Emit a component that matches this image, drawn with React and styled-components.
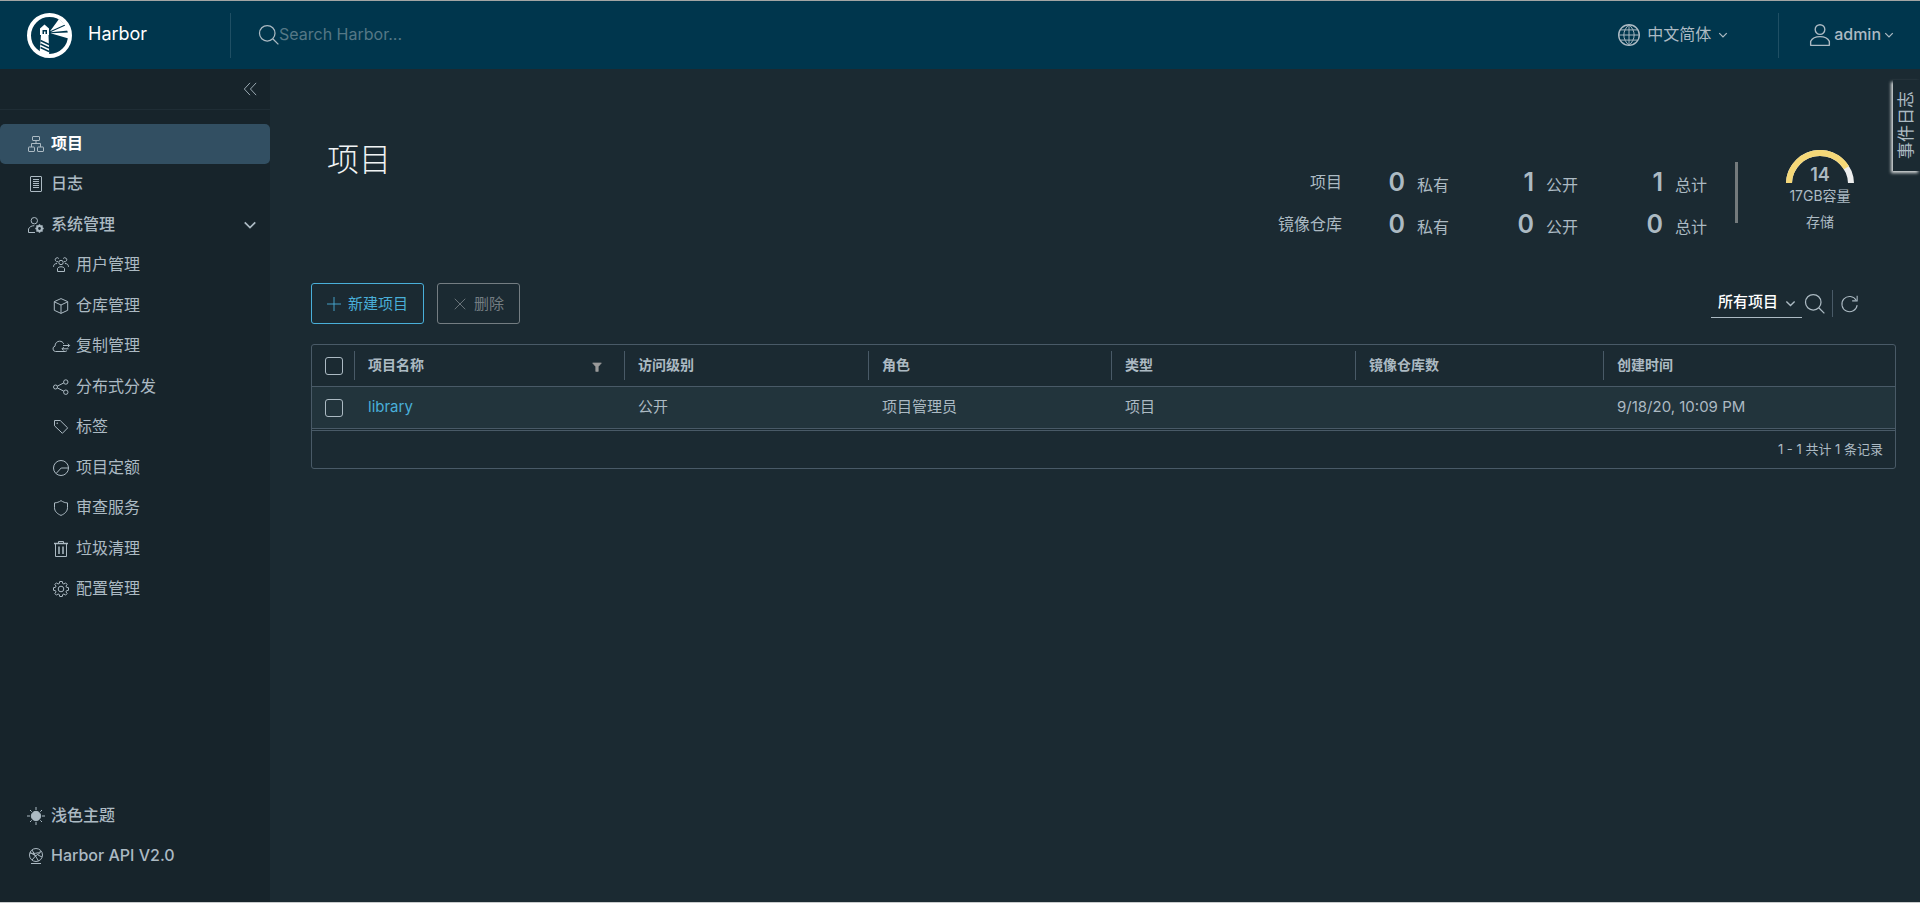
import React from 'react';
import styled, { createGlobalStyle, css } from 'styled-components';

const color = {
  header: '#00364d',
  side: '#17242b',
  page: '#1b2a32',
  active: '#324f62',
  text: '#acbac3',
  line: '#495a67',
  row: '#22343c',
  link: '#49afd9',
  muted: '#747d82',
};

const GlobalStyle = createGlobalStyle`
  *, *::before, *::after { box-sizing: border-box; }
  body {
    margin: 0;
    background: ${color.page};
    color: ${color.text};
    font-family: Inter, "Noto Sans CJK SC", sans-serif;
    font-size: 16px;
    line-height: 24px;
  }
  button, input, select { font: inherit; color: inherit; }
  button { cursor: pointer; }
  ul, dl, dd, h1 { margin: 0; padding: 0; }
  ul { list-style: none; }
  a { color: inherit; text-decoration: none; }
`;

/* ---------- icons ---------- */

const Svg = styled.svg`
  display: block;
  flex: none;
  width: ${(p) => p.$size || 16}px;
  height: ${(p) => p.$size || 16}px;
  fill: none;
  stroke: currentColor;
  stroke-width: ${(p) => p.$stroke || 1};
`;

const icons = {
  tree: (
    <>
      <rect x="4.500" y="0.500" width="7" height="4" rx="0.500" />
      <rect x="0.500" y="11" width="6" height="4.500" rx="0.500" />
      <rect x="9.500" y="11" width="6" height="4.500" rx="0.500" />
      <path d="M8 4.500v3M3.500 11V7.500h9V11" />
    </>
  ),
  list: (
    <>
      <rect x="2.500" y="0.500" width="11" height="15" rx="0.500" />
      <path d="M5 3.500h6M5 5.500h6M5 7.500h6M5 9.500h6M5 11.500h6" />
    </>
  ),
  admin: (
    <>
      <circle cx="6.300" cy="3.700" r="3.200" />
      <path d="M7 15.500H.5V12c1-2.200 3-3.300 5.800-3.300" />
      <circle cx="11.500" cy="11.500" r="2.400" strokeWidth="2" />
      <path d="M11.500 7.300v2M11.500 13.700v2M7.300 11.500h2M13.700 11.500h2M8.500 8.500l1.500 1.500M13 13l1.500 1.500M14.500 8.500L13 10M10 13l-1.500 1.500" strokeWidth="1.500" />
    </>
  ),
  users: (
    <>
      <circle cx="8" cy="5.500" r="2.200" />
      <path d="M4.500 14.500v-3c1-2.300 6-2.300 7 0v3zM5 4.600A2 2 0 1 1 5.800 1.500M11 4.600a2 2 0 1 0-.8-3.100M.5 9.800c.2-2.300 1.300-3.300 3.600-3.300M15.500 9.800c-.2-2.300-1.300-3.300-3.600-3.300" />
    </>
  ),
  box: (
    <path d="M8 .6l6.700 3v8.700L8 15.400l-6.700-3.100V3.600zM1.300 3.800L8 7l6.700-3.200M8 7v8.400" />
  ),
  cloud: (
    <>
      <path d="M14 12.500a2.500 2.500 0 0 1-1.800 1H2.500A2.700 2.700 0 0 1 2 8.200C2 5 4.200 3.200 6.600 3.200c2 0 3.400 1 4.100 2.600" />
      <path d="M10 7.500h6.500M14.800 5.700l1.800 1.800-1.800 1.800M15.500 10.800H9M10.800 9l-1.800 1.800 1.800 1.800" />
    </>
  ),
  share: (
    <>
      <circle cx="2.500" cy="8" r="2" />
      <circle cx="12.800" cy="3" r="2.200" />
      <circle cx="12.800" cy="13.200" r="2.200" />
      <path d="M4.300 7.200l6.500-3.300M4.300 8.900l6.500 3.300" />
    </>
  ),
  tag: (
    <>
      <path d="M1.500 1.500h5.700l7.500 7.400-5.300 5.400L1.500 6.800z" strokeLinejoin="round" />
      <circle cx="4.200" cy="4.200" r=".4" />
    </>
  ),
  quota: (
    <>
      <circle cx="8" cy="8" r="7.500" />
      <path d="M15.500 8H8.200l-5 5.400" />
    </>
  ),
  shield: (
    <path d="M8 .6c2 1.500 4.200 2.200 6.500 2.300v4.800c0 3.500-2.500 6-6.500 7.700-4-1.700-6.500-4.200-6.500-7.700V2.900C3.800 2.800 6 2.100 8 .6z" />
  ),
  trash: (
    <>
      <path d="M2.500 3v12.500h11V3M5.500 2.500v-2h5v2" />
      <path d="M1 2.500h14" strokeWidth="1.500" />
      <path d="M6 5.500v7.500M10 5.500v7.500" strokeWidth="1.500" />
    </>
  ),
  cog: (
    <>
      <circle cx="8" cy="8" r="2.800" />
      <path d="M6.700.5h2.600l.4 2 1.200.5 1.700-1.100 1.500 1.500L13 5.100l.5 1.200 2 .4v2.600l-2 .4-.5 1.200 1.100 1.700-1.500 1.500-1.700-1.100-1.200.5-.4 2H6.700l-.4-2-1.200-.5-1.700 1.100-1.500-1.500L3 10.900l-.5-1.200-2-.4V6.700l2-.4L3 5.100 1.900 3.400l1.500-1.500L5.100 3l1.200-.5z" strokeLinejoin="round" />
    </>
  ),
  sun: (
    <>
      <circle cx="8" cy="8" r="4.700" fill="currentColor" />
      <path d="M8-1v3M8 14v3M-1 8h3M14 8h3M2 2l1.700 1.700M12.300 12.300L14 14M14 2l-1.700 1.700M3.700 12.300L2 14" />
    </>
  ),
  api: (
    <>
      <circle cx="8" cy="7" r="6.500" />
      <path d="M3 15.500h10" />
      <path d="M2 5c3 .8 8 .5 11-1.500M4 12l3.500-4L4 2M7.500 8l3 5M7.500 8l5-3.500M2 4.500l6 3.500M10 7l4 2" />
    </>
  ),
  search: (
    <>
      <circle cx="6.600" cy="6.600" r="6.200" />
      <path d="M11.200 11.200l4.300 4.300" />
    </>
  ),
  globe: (
    <>
      <circle cx="8" cy="8" r="7.500" />
      <path d="M8 .5v15M1.700 4.300h12.600M.5 8h15M1.700 11.700h12.600M8 .5c-5 4.500-5 10.500 0 15M8 .5c5 4.500 5 10.500 0 15" strokeWidth=".7" />
    </>
  ),
  user: (
    <>
      <circle cx="8" cy="4" r="3.500" />
      <path d="M1.200 15.500v-2.900C2.400 10.300 5 9.200 8 9.200s5.600 1.100 6.800 3.400v2.900z" strokeLinejoin="round" />
    </>
  ),
  down: <path d="M2 5L8 11 14 5" />,
  collapse: <path d="M8 1L1.500 8 8 15M15 1L8.500 8l6.500 7" />,
  plus: <path d="M8 0v16M0 8h16" />,
  close: <path d="M2 2l12 12M14 2L2 14" />,
  refresh: (
    <>
      <path d="M14.300 5A7.200 7.200 0 1 0 15.200 9.500" />
      <path d="M15.200.8v4.700h-4.700" />
    </>
  ),
  filter: <path d="M1 1.500h14l-5 6v7.500H6V7.500z" fill="currentColor" />,
};

const Icon = ({ name, size, stroke }) => (
  <Svg viewBox="0 0 16 16" overflow="visible" $size={size} $stroke={stroke} aria-hidden="true">
    {icons[name]}
  </Svg>
);

const Logo = () => (
  <svg width="45" height="45" viewBox="0 0 45 45" aria-hidden="true">
    <circle cx="22.500" cy="22.500" r="20.500" fill="none" stroke="#fff" strokeWidth="4" />
    <path d="M17.500 11.500l4.500 4v6.500H13v-6.500z" fill="#fff" />
    <path d="M15.500 17h4.500v4h-1.500v-2.500h-1.500V21h-1.500z" fill={color.header} />
    <path d="M14 22h7.500l.8 21.500-9.800-2.500z" fill="#fff" />
    <path d="M13.500 27.500l8.500 4M13.500 31l8.500 4M13.500 34.500l8.500 4" stroke={color.header} strokeWidth="1.400" />
    <path d="M23 18.200L32 6l6 5.500zM23.500 19.200L39.500 12l1.800 5.500zM23.500 20.300l18-.8v6z" fill="#fff" />
  </svg>
);

/* ---------- shell ---------- */

const Shell = styled.div`
  display: flex;
  flex-direction: column;
  min-height: 100vh;
  border-top: 1px solid #a3a5a4;
  border-bottom: 1px solid #c9cccd;
`;

const Header = styled.header`
  display: flex;
  align-items: center;
  height: 68px;
  padding-right: 26px;
  background: ${color.header};
`;

const HeaderText = styled.span`
  padding-bottom: 2px;
`;

const Brand = styled.a`
  display: flex;
  align-items: center;
  gap: 16px;
  width: 230px;
  padding-left: 27px;
  color: #fff;
  font-size: 18px;
`;

const Divider = styled.span`
  flex: none;
  width: 1px;
  height: ${(p) => p.$height || 45}px;
  background: ${(p) => p.$tone || '#1f4f64'};
`;

const SearchBox = styled.label`
  display: flex;
  flex: 1;
  align-items: center;
  padding-left: 28px;
`;

const SearchInput = styled.input`
  flex: 1;
  min-width: 0;
  height: 24px;
  padding: 0 0 3px;
  border: 0;
  outline: 0;
  background: transparent;
  &::placeholder { color: #557886; opacity: 1; }
`;

const HeaderButton = styled.button`
  display: flex;
  align-items: center;
  gap: ${(p) => p.$gap}px;
  padding: 0;
  border: 0;
  background: none;
  font-weight: ${(p) => p.$weight || 400};
`;

const Account = styled.div`
  display: flex;
  align-items: center;
  gap: 30px;
  margin-left: 50px;
`;

const Body = styled.div`
  display: flex;
  flex: 1;
`;

/* ---------- sidebar ---------- */

const Sidebar = styled.nav`
  display: flex;
  flex: none;
  flex-direction: column;
  width: 270px;
  padding-bottom: 26px;
  background: ${color.side};
`;

const CollapseRow = styled.div`
  display: flex;
  align-items: center;
  justify-content: flex-end;
  height: 41px;
  margin-bottom: 14px;
  padding-right: 13px;
  border-bottom: 1px solid #1f2d35;
`;

const IconButton = styled.button`
  display: flex;
  padding: 0;
  border: 0;
  background: none;
`;

const NavItem = styled.a`
  display: flex;
  align-items: center;
  gap: 7px;
  height: 40px;
  padding: 0 13px 0 28px;
  border-radius: 5px;
  font-weight: 500;
  ${(p) =>
    p.$active &&
    css`
      background: ${color.active};
      color: #fff;
      font-weight: 700;
      svg { color: ${color.text}; }
    `}
`;

const NavLabel = styled.span`
  flex: 1;
  padding-bottom: 2px;
`;

const NavList = styled.ul`
  > li:nth-child(even) { margin-bottom: 1px; }
`;

const SubList = styled.ul`
  > li:nth-child(odd) { margin-bottom: 1px; }
  ${NavItem} {
    padding-left: 53px;
    font-weight: 400;
  }
`;

const NavFooter = styled.div`
  margin-top: auto;
`;

/* ---------- page ---------- */

const Main = styled.main`
  flex: 1;
  min-width: 0;
  padding: 68px 24px 24px 41px;
`;

const TopRow = styled.div`
  display: flex;
  justify-content: space-between;
  height: 113px;
`;

const Title = styled.h1`
  padding-left: 16px;
  font-size: 32px;
  font-weight: 300;
  line-height: 46px;
  color: #f0f3f4;
`;

const Summary = styled.div`
  display: flex;
  align-items: flex-start;
  margin-right: 42px;
`;

const Stats = styled.table`
  margin-top: 24px;
  margin-right: 28px;
  border-collapse: collapse;
  th {
    height: 42px;
    padding: 0;
    font-weight: 400;
    text-align: right;
  }
  td {
    width: 129px;
    padding: 0;
  }
  td:nth-child(2) { width: 107px; }
`;

const Stat = styled.div`
  display: flex;
  align-items: baseline;
  justify-content: flex-end;
  gap: 12px;
`;

const StatValue = styled.strong`
  font-size: 25px;
  font-weight: 600;
  line-height: 32px;
`;

const Bar = styled.span`
  width: 3px;
  height: 61px;
  margin-top: 25px;
  background: #747a7c;
`;

const Storage = styled.div`
  display: flex;
  flex-direction: column;
  align-items: center;
  width: 68px;
  margin-top: 13px;
  margin-left: 48px;
  font-size: 14px;
`;

const Gauge = styled.div`
  display: grid;
  justify-items: center;
  align-items: end;
  svg, strong { grid-area: 1 / 1; }
  strong {
    font-size: 18px;
    font-weight: 600;
    line-height: 16px;
  }
`;

const Capacity = styled.span`
  margin: 1px 0 2px;
  white-space: nowrap;
`;

const Toolbar = styled.div`
  display: flex;
  align-items: center;
  justify-content: space-between;
  margin: 33px 0 20px;
`;

const Group = styled.div`
  display: flex;
  align-items: center;
  gap: ${(p) => p.$gap}px;
`;

const Filters = styled(Group)`
  margin-right: 38px;
`;

const ActionButton = styled.button`
  display: flex;
  align-items: center;
  gap: 7px;
  height: 41px;
  padding: 0 15px;
  border: 1px solid currentColor;
  border-radius: 3px;
  background: transparent;
  color: ${color.link};
  font-size: 15px;
  &:disabled { color: ${color.muted}; cursor: default; }
`;

const SelectWrap = styled.label`
  display: grid;
  align-items: center;
  justify-items: end;
  width: 91px;
  border-bottom: 1px solid ${color.text};
  select, svg { grid-area: 1 / 1; }
  svg {
    margin-right: 6px;
    pointer-events: none;
  }
`;

const Select = styled.select`
  width: 100%;
  height: 27px;
  padding: 0 0 3px 7px;
  border: 0;
  outline: 0;
  appearance: none;
  background: transparent;
  color: #fff;
  font-size: 15px;
  font-weight: 500;
`;

const RefreshGroup = styled(Group)`
  margin-left: 4px;
`;

/* ---------- data grid ---------- */

const GridFrame = styled.div`
  border: 1px solid ${color.line};
  border-radius: 3px;
`;

const Grid = styled.table`
  width: 100%;
  table-layout: fixed;
  border-collapse: separate;
  border-spacing: 0;
  font-size: 15px;
  text-align: left;
  th, td {
    height: 42px;
    padding: 0;
    border-bottom: 1px solid ${color.line};
  }
  td {
    padding: 0 0 2px 14px;
    background: ${color.row};
  }
  td:first-child { padding: 0 0 0 13px; }
`;

const Col = styled.col`
  width: ${(p) => (p.$width ? `${p.$width}px` : 'auto')};
`;

const HeadCell = styled.div`
  display: flex;
  align-items: center;
  justify-content: space-between;
  height: 29px;
  padding: 0 22px 2px 13px;
  border-left: 1px solid ${color.line};
  font-size: 14px;
  font-weight: 600;
  button {
    padding-top: 4px;
    color: #9a9a9a;
  }
`;

const Check = styled.input`
  display: block;
  width: 18px;
  height: 18px;
  margin: 0;
  border: 1px solid ${color.text};
  border-radius: 3px;
  appearance: none;
  background: transparent;
`;

const CheckHead = styled.div`
  padding-left: 13px;
`;

const GridLink = styled.a`
  color: ${color.link};
`;

const GridFooter = styled.div`
  margin-top: 1px;
  padding: 6px 12px 7px;
  border-top: 1px solid ${color.line};
  font-size: 13px;
  text-align: right;
`;

const EventTab = styled.button`
  position: absolute;
  top: 80px;
  right: 0;
  width: 27px;
  height: 91px;
  padding: 0;
  border: 0;
  background: ${color.page};
  box-shadow: -2px 2px 3px #d7dadb;
  font-size: 17px;
  line-height: 27px;
  text-align: center;
  span {
    display: block;
    height: 91px;
    writing-mode: vertical-rl;
    text-orientation: sideways;
    transform: rotate(180deg);
  }
`;

/* ---------- data ---------- */

const subItems = [
  ['users', '用户管理'],
  ['box', '仓库管理'],
  ['cloud', '复制管理'],
  ['share', '分布式分发'],
  ['tag', '标签'],
  ['quota', '项目定额'],
  ['shield', '审查服务'],
  ['trash', '垃圾清理'],
  ['cog', '配置管理'],
];

const stats = [
  { label: '项目', values: [[0, '私有'], [1, '公开'], [1, '总计']] },
  { label: '镜像仓库', values: [[0, '私有'], [0, '公开'], [0, '总计']] },
];

const columns = [
  { label: '项目名称', width: 270, filter: true },
  { label: '访问级别', width: 244 },
  { label: '角色', width: 243 },
  { label: '类型', width: 244 },
  { label: '镜像仓库数', width: 248 },
  { label: '创建时间' },
];

const projects = [
  { name: 'library', cells: ['公开', '项目管理员', '项目', '', '9/18/20, 10:09 PM'] },
];

const NavLink = ({ icon, label, active, children }) => (
  <NavItem href="#" $active={active} aria-current={active ? 'page' : undefined}>
    <Icon name={icon} />
    <NavLabel>{label}</NavLabel>
    {children}
  </NavItem>
);

export default function App() {
  return (
    <>
      <GlobalStyle />
      <Shell>
        <Header>
          <Brand href="#">
            <Logo />
            <HeaderText>Harbor</HeaderText>
          </Brand>
          <Divider />
          <SearchBox>
            <Icon name="search" size={20} />
            <SearchInput type="text" placeholder="Search Harbor..." aria-label="Search Harbor" />
          </SearchBox>
          <HeaderButton type="button" $gap={7}>
            <Icon name="globe" size={22} />
            <HeaderText>中文简体</HeaderText>
            <Icon name="down" size={10} stroke={2} />
          </HeaderButton>
          <Account>
            <Divider />
            <HeaderButton type="button" $gap={3} $weight={500}>
              <Icon name="user" size={22} />
              <HeaderText>admin</HeaderText>
              <Icon name="down" size={10} stroke={2} />
            </HeaderButton>
          </Account>
        </Header>
        <Body>
          <Sidebar>
            <CollapseRow>
              <IconButton type="button" aria-label="收起">
                <Icon name="collapse" size={14} />
              </IconButton>
            </CollapseRow>
            <NavList>
              <li><NavLink icon="tree" label="项目" active /></li>
              <li><NavLink icon="list" label="日志" /></li>
              <li>
                <NavLink icon="admin" label="系统管理">
                  <Icon name="down" size={14} stroke={2} />
                </NavLink>
                <SubList>
                  {subItems.map(([icon, label]) => (
                    <li key={label}><NavLink icon={icon} label={label} /></li>
                  ))}
                </SubList>
              </li>
            </NavList>
            <NavFooter>
              <NavLink icon="sun" label="浅色主题" />
              <NavLink icon="api" label="Harbor API V2.0" />
            </NavFooter>
          </Sidebar>
          <Main>
            <TopRow>
              <Title>项目</Title>
              <Summary>
                <Stats>
                  <tbody>
                    {stats.map((row) => (
                      <tr key={row.label}>
                        <th scope="row">{row.label}</th>
                        {row.values.map(([value, label]) => (
                          <td key={label}>
                            <Stat>
                              <StatValue>{value}</StatValue>
                              {label}
                            </Stat>
                          </td>
                        ))}
                      </tr>
                    ))}
                  </tbody>
                </Stats>
                <Bar />
                <Storage>
                  <Gauge>
                    <svg width="68" height="33" viewBox="0 0 68 33" aria-hidden="true">
                      <path d="M3 34a31 31 0 0 1 62 0" fill="none" stroke="#eeeeee" strokeWidth="6" />
                      <path d="M3 34a31 31 0 0 1 57.400-16.300" fill="none" stroke="#f5d878" strokeWidth="6" />
                    </svg>
                    <strong>14</strong>
                  </Gauge>
                  <Capacity>17GB容量</Capacity>
                  <span>存储</span>
                </Storage>
              </Summary>
            </TopRow>
            <Toolbar>
              <Group $gap={13}>
                <ActionButton type="button">
                  <Icon name="plus" size={14} />
                  新建项目
                </ActionButton>
                <ActionButton type="button" disabled>
                  <Icon name="close" size={14} />
                  删除
                </ActionButton>
              </Group>
              <Filters $gap={3}>
                <SelectWrap>
                  <Select aria-label="项目筛选" defaultValue="all">
                    <option value="all">所有项目</option>
                  </Select>
                  <Icon name="down" size={11} stroke={2} />
                </SelectWrap>
                <IconButton type="button" aria-label="搜索">
                  <Icon name="search" size={20} />
                </IconButton>
                <RefreshGroup $gap={8}>
                  <Divider $height={27} $tone={color.line} />
                  <IconButton type="button" aria-label="刷新">
                    <Icon name="refresh" size={17} />
                  </IconButton>
                </RefreshGroup>
              </Filters>
            </Toolbar>
            <GridFrame>
              <Grid>
                <colgroup>
                  <Col $width={42} />
                  {columns.map((c) => <Col key={c.label} $width={c.width} />)}
                </colgroup>
                <thead>
                  <tr>
                    <th scope="col">
                      <CheckHead><Check type="checkbox" aria-label="全选" /></CheckHead>
                    </th>
                    {columns.map((c) => (
                      <th key={c.label} scope="col">
                        <HeadCell>
                          {c.label}
                          {c.filter && (
                            <IconButton type="button" aria-label="过滤">
                              <Icon name="filter" size={10} />
                            </IconButton>
                          )}
                        </HeadCell>
                      </th>
                    ))}
                  </tr>
                </thead>
                <tbody>
                  {projects.map((p) => (
                    <tr key={p.name}>
                      <td><Check type="checkbox" aria-label={p.name} /></td>
                      <td><GridLink href="#">{p.name}</GridLink></td>
                      {p.cells.map((cell, i) => <td key={i}>{cell}</td>)}
                    </tr>
                  ))}
                </tbody>
              </Grid>
              <GridFooter>1 - 1 共计 1 条记录</GridFooter>
            </GridFrame>
          </Main>
        </Body>
      </Shell>
      <EventTab type="button"><span>事件日志</span></EventTab>
    </>
  );
}
